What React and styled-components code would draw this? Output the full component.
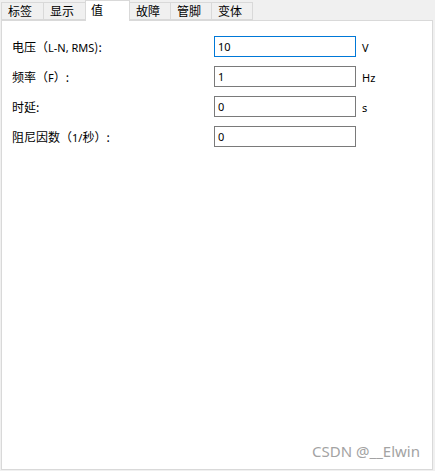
import React from "react";
import styled, { createGlobalStyle } from "styled-components";

const Global = createGlobalStyle`
  html, body { margin: 0; padding: 0; background: #f0f0f0; }
  body { font-family: "Noto Sans", "Noto Sans CJK SC", sans-serif; }
`;

const Window = styled.div`
  width: 435px;
  height: 471px;
  box-sizing: border-box;
  padding: 0 2px 1px 1px;
  display: flex;
  flex-direction: column;
  background: #f0f0f0;
`;

const TabBar = styled.div`
  height: 20px;
  display: flex;
  align-items: flex-end;
`;

const Tab = styled.div`
  box-sizing: border-box;
  width: ${(p) => p.$w}px;
  height: ${(p) => (p.$active ? 21 : 18)}px;
  margin-bottom: ${(p) => (p.$active ? -1 : 0)}px;
  position: relative;
  z-index: ${(p) => (p.$active ? 2 : 0)};
  border: 1px solid #d9d9d9;
  border-bottom: ${(p) => (p.$active ? "none" : "1px solid #d9d9d9")};
  margin-left: -1px;
  &:first-child { margin-left: 0; }
  background: ${(p) => (p.$active ? "#ffffff" : "#f0f0f0")};
  font-family: "Noto Sans CJK SC", sans-serif;
  font-size: 12px;
  line-height: 1;
  color: #000;
  display: flex;
  align-items: ${(p) => (p.$active ? "flex-start" : "center")};
  padding: ${(p) => (p.$active ? "3px 0 0 5px" : "0 0 0 6px")};
`;

const Panel = styled.div`
  position: relative;
  flex: 1;
  background: #ffffff;
  border: 1px solid #d9d9d9;
  padding: 15px 0 0 10px;
  display: flex;
  flex-direction: column;
  gap: 9px;
`;

const Row = styled.div`
  display: flex;
  align-items: center;
  height: 21px;
`;

const Label = styled.div`
  width: 202px;
  font-family: "Noto Sans CJK SC", sans-serif;
  font-size: 12px;
  color: #000;
  white-space: nowrap;
`;

const Latin = styled.span`
  font-family: "Noto Sans", sans-serif;
  font-size: 11px;
`;

const Field = styled.div`
  box-sizing: border-box;
  width: 142px;
  height: 21px;
  border: 1px solid ${(p) => (p.$focus ? "#0078d7" : "#7a7a7a")};
  background: #fff;
  font-family: "Noto Sans", sans-serif;
  font-size: 11px;
  color: #000;
  display: flex;
  align-items: center;
  padding-left: 3px;
`;

const Unit = styled.div`
  margin-left: 6px;
  font-family: "Noto Sans", sans-serif;
  font-size: 11px;
  color: #000;
  line-height: 14px;
  margin-top: 2px;
`;

const Watermark = styled.div`
  position: absolute;
  right: 12px;
  bottom: 8px;
  font-family: "Noto Sans", sans-serif;
  font-size: 15px;
  color: #a3a3a3;
`;

const tabs = [
  { t: "标签", w: 43 },
  { t: "显示", w: 43 },
  { t: "值", w: 45, active: true },
  { t: "故障", w: 42 },
  { t: "管脚", w: 42 },
  { t: "变体", w: 42 },
];

const rows = [
  { label: <>电压（<Latin>L-N, RMS</Latin>):</>, value: "10", unit: "V", focus: true },
  { label: <>频率（<Latin>F</Latin>）:</>, value: "1", unit: "Hz" },
  { label: <>时延:</>, value: "0", unit: "s" },
  { label: <>阻尼因数（<Latin>1/</Latin>秒）:</>, value: "0", unit: "" },
];

export default function App() {
  return (
    <>
      <Global />
      <Window>
        <TabBar>
          {tabs.map((tab) => (
            <Tab key={tab.t} $w={tab.w} $active={tab.active}>
              {tab.t}
            </Tab>
          ))}
        </TabBar>
        <Panel>
          {rows.map((r, i) => (
            <Row key={i}>
              <Label>{r.label}</Label>
              <Field $focus={r.focus}>{r.value}</Field>
              {r.unit && <Unit>{r.unit}</Unit>}
            </Row>
          ))}
          <Watermark>CSDN @__Elwin</Watermark>
        </Panel>
      </Window>
    </>
  );
}
